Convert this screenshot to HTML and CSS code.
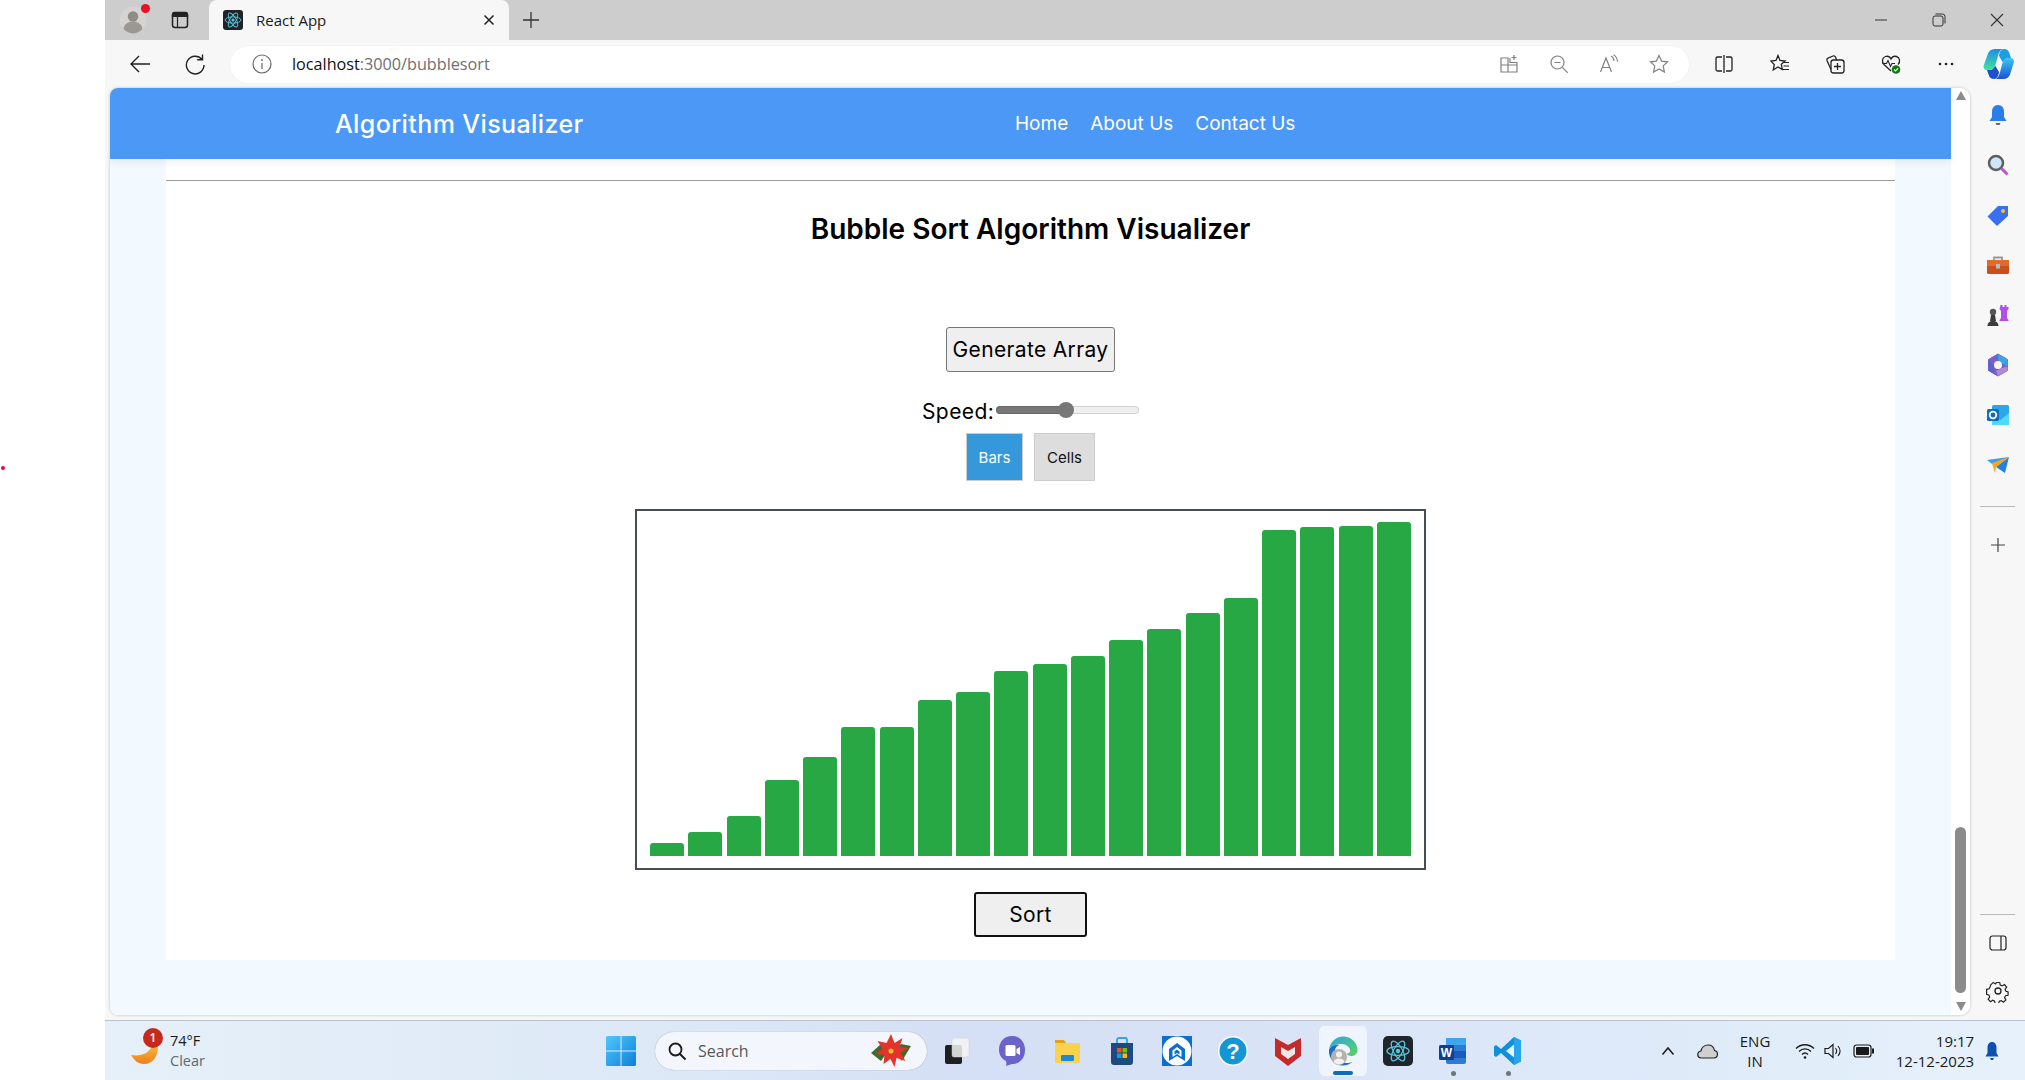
FILE: index.html
```html
<!DOCTYPE html>
<html lang="en">
<head>
    <meta charset="UTF-8">
    <title>React App</title>
    <link rel="stylesheet" href="styles.css">
</head>
<body>
    <svg class="defs" width="0" height="0">
        <symbol id="atom" viewBox="0 0 24 24">
            <g fill="none" stroke="#58c4dc" stroke-width="1.1">
                <ellipse cx="12" cy="12" rx="9.5" ry="3.8"/>
                <ellipse cx="12" cy="12" rx="9.5" ry="3.8" transform="rotate(60 12 12)"/>
                <ellipse cx="12" cy="12" rx="9.5" ry="3.8" transform="rotate(120 12 12)"/>
            </g>
            <circle cx="12" cy="12" r="1.9" fill="#58c4dc"/>
        </symbol>
    </svg>

    <div class="desktop-strip"><span class="red-dot"></span></div>

    <div class="screen">
        <div class="window">
            <!-- tab strip -->
            <div class="tabbar">
                <div class="profile">
                    <svg viewBox="0 0 28 28" width="28" height="28">
                        <circle cx="14" cy="14" r="13.5" fill="#d6d3d0"/>
                        <circle cx="14" cy="10.5" r="5.2" fill="#8f8b87"/>
                        <path d="M4.5 23c1-5.2 5-7.4 9.5-7.4s8.5 2.2 9.5 7.4c-2.5 2.8-5.8 4.4-9.5 4.4s-7-1.600-9.500-4.400z" fill="#9b9792"/>
                    </svg>
                    <span class="profile-dot"></span>
                </div>
                <svg class="tab-actions" viewBox="0 0 20 20" width="20" height="20">
                    <rect x="2.5" y="2.5" width="15" height="15" rx="2.5" fill="none" stroke="#222" stroke-width="1.5"/>
                    <path d="M2.5 6.5h15v-2a2 2 0 0 0-2-2h-11a2 2 0 0 0-2 2zM7.5 6.5v11" fill="#222" stroke="#222" stroke-width="1.2"/>
                </svg>
                <div class="tab">
                    <span class="favicon"><svg width="20" height="20"><use href="#atom"/></svg></span>
                    <span class="tab-title">React App</span>
                    <svg class="tab-close" viewBox="0 0 12 12" width="12" height="12"><path d="M1.5 1.5l9 9M10.5 1.5l-9 9" stroke="#222" stroke-width="1.5"/></svg>
                </div>
                <svg class="new-tab" viewBox="0 0 18 18" width="18" height="18"><path d="M9 1v16M1 9h16" stroke="#333" stroke-width="1.3"/></svg>
                <div class="win-controls">
                    <svg viewBox="0 0 14 14" width="14" height="14"><path d="M1 7h12" stroke="#333" stroke-width="1"/></svg>
                    <svg viewBox="0 0 14 14" width="14" height="14"><rect x="1" y="3" width="10" height="10" rx="2" fill="none" stroke="#333"/><path d="M3.5 1h7A2.5 2.5 0 0 1 13 3.5v7" fill="none" stroke="#333"/></svg>
                    <svg viewBox="0 0 14 14" width="14" height="14"><path d="M1 1l12 12M13 1L1 13" stroke="#333" stroke-width="1.1"/></svg>
                </div>
            </div>

            <!-- address bar row -->
            <div class="toolbar">
                <svg class="tool-back" viewBox="0 0 22 22" width="22" height="22"><path d="M21 11H2M10 3l-8 8 8 8" fill="none" stroke="#222" stroke-width="1.4"/></svg>
                <svg class="tool-reload" viewBox="0 0 22 22" width="22" height="22"><path d="M18 6.5A8.8 8.8 0 1 0 20 12M18.500 1.500v5.300h-5.300" fill="none" stroke="#222" stroke-width="1.4"/></svg>
                <div class="addressbar">
                    <svg class="info-icon" viewBox="0 0 20 20" width="20" height="20">
                        <circle cx="10" cy="10" r="9" fill="none" stroke="#666" stroke-width="1.2"/>
                        <path d="M10 9v6" stroke="#666" stroke-width="1.2"/><circle cx="10" cy="6" r=".9" fill="#666"/>
                    </svg>
                    <span class="url">localhost<span class="url-rest">:3000/bubblesort</span></span>
                    <div class="address-icons">
                        <svg viewBox="0 0 20 20" width="20" height="20"><path d="M2 4h7v14H2zM2 11h16v7H9M11 4v4.5h7V11" fill="none" stroke="#808080" stroke-width="1.2"/><path d="M15 1v5M12.500 3.500h5" stroke="#808080" stroke-width="1.2"/></svg>
                        <svg viewBox="0 0 20 20" width="20" height="20"><circle cx="8.5" cy="8.5" r="6.5" fill="none" stroke="#808080" stroke-width="1.2"/><path d="M13.300 13.300l5.500 5.500M5.500 8.500h6" stroke="#808080" stroke-width="1.2"/></svg>
                        <svg viewBox="0 0 20 20" width="20" height="20"><path d="M1.500 18L7 4l5.500 14M3.300 13.500h7.500" fill="none" stroke="#808080" stroke-width="1.2"/><path d="M12 2c2 1 3 3 3 5M14.500 0.800c2.500 1.500 4 4 4 7" fill="none" stroke="#808080" stroke-width="1.1"/></svg>
                        <svg viewBox="0 0 20 20" width="20" height="20"><path d="M10 1.500l2.600 5.600 6 .7-4.400 4.100 1.200 6.100-5.400-3-5.400 3 1.200-6.100L1.400 7.800l6-.7z" fill="none" stroke="#808080" stroke-width="1.2"/></svg>
                    </div>
                </div>
                <div class="tool-icons">
                    <svg viewBox="0 0 20 20" width="20" height="20"><path d="M8 3H3.500A1.500 1.500 0 0 0 2 4.500v11A1.500 1.500 0 0 0 3.500 17H8M12 3h4.500A1.500 1.500 0 0 1 18 4.500v11a1.500 1.500 0 0 1-1.500 1.500H12M10 1v18" fill="none" stroke="#222" stroke-width="1.3"/></svg>
                    <svg viewBox="0 0 20 20" width="20" height="20"><path d="M8 1.500l2 5 5 .5-3.700 3.300 1 5.200L8 13l-4.800 3 1.100-5.400L.8 7l5.200-.5z" fill="none" stroke="#222" stroke-width="1.3"/><path d="M14 8.500h5M13.500 12h5.500M13 15.500h6" stroke="#222" stroke-width="1.2"/></svg>
                    <svg viewBox="0 0 20 20" width="20" height="20"><rect x="6" y="6" width="13" height="13" rx="2.5" fill="none" stroke="#222" stroke-width="1.3"/><path d="M12.500 9v7M9 12.500h7M6 15.500L2 6.500c-.4-1 .2-2 1-2.400L8 2c1-.4 2-.1 2.500 1l1 3" fill="none" stroke="#222" stroke-width="1.3"/></svg>
                    <svg viewBox="0 0 20 20" width="20" height="20"><path d="M10 17L3 10.500C.5 8 1 3.500 4.500 2.500 7 1.800 9 3 10 5c1-2 3-3.200 5.500-2.500 3.500 1 4 5.500 1.500 8" fill="none" stroke="#222" stroke-width="1.3"/><path d="M1.500 9.500h4l1.500-3 2.500 6 1.500-3h3" fill="none" stroke="#222" stroke-width="1.1"/><circle cx="15" cy="15.500" r="4.300" fill="#107c10"/><path d="M13 15.500l1.500 1.500 2.500-2.700" fill="none" stroke="#fff" stroke-width="1.1"/></svg>
                    <svg viewBox="0 0 20 20" width="20" height="20"><circle cx="4" cy="10" r="1.3" fill="#222"/><circle cx="10" cy="10" r="1.3" fill="#222"/><circle cx="16" cy="10" r="1.3" fill="#222"/></svg>
                </div>
                <svg class="copilot" viewBox="0 0 32 32" width="32" height="32">
                    <defs>
                        <linearGradient id="cpA" x1="0" y1="0" x2="0" y2="1"><stop offset="0" stop-color="#1b8fe6"/><stop offset="1" stop-color="#45e0a0"/></linearGradient>
                        <linearGradient id="cpB" x1="0" y1="0" x2="0" y2="1"><stop offset="0" stop-color="#3cc8f2"/><stop offset="1" stop-color="#1a50d6"/></linearGradient>
                    </defs>
                    <path d="M21 1c3 0 5 2 5.500 4.500L28 10h-2c-3 0-5 1.500-6 4.500L16 8c.500-4 2-7 5-7z" fill="#1a9fe4"/>
                    <path d="M11 31c-3 0-5-2-5.500-4.500L4 22h2c3 0 5-1.500 6-4.500L16 24c-.500 4-2 7-5 7z" fill="#1d4fd0"/>
                    <path d="M12 1h9c-3 0-4.500 2-5.500 5l-3 11c-1 3-3 5-6 5H4c-2.500 0-4-2-3.300-4.500L4.500 7C5.500 3 8 1 12 1z" fill="url(#cpA)"/>
                    <path d="M20 31h-9c3 0 4.500-2 5.500-5l3-11c1-3 3-5 6-5h2c2.500 0 4 2 3.300 4.500L27.500 25c-1 4-3.500 6-7.500 6z" fill="url(#cpB)"/>
                </svg>
            </div>

            <div class="browser-body">
                <div class="viewport">
                    <div class="page">
                        <nav class="navbar">
                            <a class="brand" href="#">Algorithm Visualizer</a>
                            <div class="nav-links">
                                <a href="#">Home</a>
                                <a href="#">About Us</a>
                                <a href="#">Contact Us</a>
                            </div>
                        </nav>
                        <div class="page-bg">
                            <main class="panel">
                                <hr class="rule">
                                <h1>Bubble Sort Algorithm Visualizer</h1>
                                <button class="btn generate">Generate Array</button>
                                <div class="speed-row">
                                    <label for="speed">Speed:</label>
                                    <input id="speed" class="speed" type="range" min="0" max="100" value="49">
                                </div>
                                <div class="view-toggle">
                                    <button class="toggle active">Bars</button>
                                    <button class="toggle">Cells</button>
                                </div>
                                <div class="chart">
                                    <div class="bar" style="height: 13px"></div>
                                    <div class="bar" style="height: 24px"></div>
                                    <div class="bar" style="height: 40px"></div>
                                    <div class="bar" style="height: 76px"></div>
                                    <div class="bar" style="height: 99px"></div>
                                    <div class="bar" style="height: 129px"></div>
                                    <div class="bar" style="height: 129px"></div>
                                    <div class="bar" style="height: 156px"></div>
                                    <div class="bar" style="height: 164px"></div>
                                    <div class="bar" style="height: 185px"></div>
                                    <div class="bar" style="height: 192px"></div>
                                    <div class="bar" style="height: 200px"></div>
                                    <div class="bar" style="height: 216px"></div>
                                    <div class="bar" style="height: 227px"></div>
                                    <div class="bar" style="height: 243px"></div>
                                    <div class="bar" style="height: 258px"></div>
                                    <div class="bar" style="height: 326px"></div>
                                    <div class="bar" style="height: 329px"></div>
                                    <div class="bar" style="height: 330px"></div>
                                    <div class="bar" style="height: 334px"></div>
                                </div>
                                <button class="btn sort">Sort</button>
                            </main>
                        </div>
                    </div>
                    <div class="scrollbar">
                        <span class="arrow-up"></span>
                        <span class="thumb"></span>
                        <span class="arrow-down"></span>
                    </div>
                </div>

                <aside class="sidebar">
                    <svg viewBox="0 0 24 24" width="24" height="24"><path d="M12 2c-4 0-6 3-6 6.500V14l-2.500 4h17L18 14V8.500C18 5 16 2 12 2z" fill="#2b7de9"/><path d="M9.500 20h5l-1 2h-3z" fill="#666"/></svg>
                    <svg viewBox="0 0 24 24" width="24" height="24"><circle cx="10" cy="10" r="7" fill="#cfe6f7" stroke="#5f5f5f" stroke-width="2.5"/><path d="M15.500 15.500l6 6" stroke="#c64fd8" stroke-width="3"/></svg>
                    <svg viewBox="0 0 24 24" width="24" height="24"><path d="M1.500 13.500L12 3h10v10L11 23z" fill="#3a6ff0"/><circle cx="17" cy="8" r="2" fill="#f5c518"/></svg>
                    <svg viewBox="0 0 24 24" width="24" height="24"><path d="M8 7V4.500h8V7" fill="none" stroke="#999" stroke-width="1.8"/><rect x="1" y="7" width="22" height="14" rx="1.5" fill="#c8501f"/><rect x="1" y="7" width="22" height="6" fill="#e26b2c"/><rect x="10" y="11" width="4" height="4.5" fill="#bbb"/></svg>
                    <svg viewBox="0 0 24 24" width="24" height="24"><path d="M14.500 2h2v2h2V2h2v2h2v2l-1.500 2v7l1.500 2v1h-9v-1l1.500-2V8l-1.500-2z" fill="#b44de8"/><circle cx="7" cy="9" r="3.2" fill="#555"/><path d="M5 12h4l1 6H4zM1.500 23c0-3 2-5 5.500-5s5.500 2 5.500 5z" fill="#3c3c3c"/></svg>
                    <svg viewBox="0 0 24 24" width="24" height="24"><path d="M12 1l9.500 5.500v11L12 23l-9.500-5.500v-11z" fill="#7a5fd0" stroke="#7a5fd0" stroke-linejoin="round"/><path d="M12 1l9.500 5.500v7L16 10l-4-3z" fill="#35a5e8"/><path d="M2.500 6.500L8 14v5l4 4-9.500-5.500z" fill="#5a62c8"/><path d="M12 23l9.500-5.500v-4L16 15l-6 3z" fill="#b48ad8"/><circle cx="12" cy="12" r="4" fill="#f7f7f7"/></svg>
                    <svg viewBox="0 0 24 24" width="24" height="24"><rect x="6" y="2" width="17" height="20" rx="1.5" fill="#28a8ea"/><path d="M6 12l8.500 5L23 10v12H6z" fill="#50d9ff"/><rect x="1" y="6" width="12" height="12" rx="1.5" fill="#0f6cbd"/><circle cx="7" cy="12" r="3.3" fill="none" stroke="#fff" stroke-width="1.8"/></svg>
                    <svg viewBox="0 0 24 24" width="24" height="24"><path d="M1 7l22-3-9 6-4 4z" fill="#3a9bf0"/><path d="M23 4l-4 16-9-6z" fill="#2680e0"/><path d="M6 10l17-6-13 10-1 6z" fill="#f2a71e"/></svg>
                    <span class="side-divider"></span>
                    <svg class="side-plus" viewBox="0 0 16 16" width="16" height="16"><path d="M8 1v14M1 8h14" stroke="#444" stroke-width="1.2"/></svg>
                    <span class="side-divider side-divider-low"></span>
                    <svg class="side-panel" viewBox="0 0 20 20" width="20" height="20"><rect x="2" y="3" width="16" height="14" rx="2.5" fill="none" stroke="#222" stroke-width="1.2"/><path d="M13 3v14" stroke="#222" stroke-width="1.2"/></svg>
                    <svg class="side-gear" viewBox="0 0 24 24" width="24" height="24"><circle cx="12" cy="12" r="3" fill="none" stroke="#222" stroke-width="1.3"/><path d="M10 2h4l.6 3 2.300 1 2.600-1.600 2.700 3-1.800 2.500.6 2.200 2.900 1-.1 3.900-3 .6-1.100 2.200 1.600 2.600-2.900 2.700-2.500-1.800-2.300.7-1 2.900h-4l-.6-3-2.200-1-2.600 1.700-2.800-2.900 1.800-2.500-.7-2.300-2.900-1V10l3-.6 1-2.200L3.500 4.600l2.900-2.700 2.500 1.800 .5-.2z" transform="translate(1.8 1.8) scale(.85)" fill="none" stroke="#222" stroke-width="1.4"/></svg>
                </aside>
            </div>
        </div>

        <!-- windows taskbar -->
        <footer class="taskbar">
            <div class="weather">
                <div class="weather-icon">
                    <svg viewBox="0 0 30 30" width="30" height="30">
                        <defs><linearGradient id="moon" x1="0" y1="0" x2="0" y2="1"><stop offset="0" stop-color="#f9b93a"/><stop offset="1" stop-color="#ee7e1c"/></linearGradient></defs>
                        <path d="M1 19C7 20 12 19 16 17C19 15 21 12 23 9L28 11C28 20 23 28 14 28C8 28 4 24 1 19z" fill="url(#moon)"/>
                    </svg>
                    <span class="weather-badge">1</span>
                </div>
                <div class="weather-text">
                    <span class="temp">74°F</span>
                    <span class="cond">Clear</span>
                </div>
            </div>
            <svg class="start" viewBox="0 0 30 30" width="30" height="30">
                <defs><linearGradient id="winA" x1="0" y1="0" x2="1" y2="1"><stop offset="0" stop-color="#4fc8fb"/><stop offset="1" stop-color="#0f7fd8"/></linearGradient></defs>
                <path d="M0 1.500A1.500 1.500 0 0 1 1.500 0h13v14.500H0zM15.500 0h13A1.500 1.500 0 0 1 30 1.500v13H15.500zM0 15.500h14.500V30h-13A1.500 1.500 0 0 1 0 28.500zM15.500 15.500H30v13a1.500 1.500 0 0 1-1.500 1.500h-13z" fill="url(#winA)"/>
            </svg>
            <div class="searchbox">
                <svg viewBox="0 0 20 20" width="20" height="20"><circle cx="8.5" cy="8.5" r="6" fill="none" stroke="#1a1a1a" stroke-width="1.8"/><path d="M13 13l5.500 5.500" stroke="#1a1a1a" stroke-width="2"/></svg>
                <span class="search-label">Search</span>
                <svg class="flower" viewBox="0 0 44 36" width="44" height="36">
                    <path d="M2 20l10-9 7 7-7 10zM42 13l-10-2-6 8 7 9z" fill="#3f6b2c"/>
                    <path d="M22 1l3.500 9 8-5-3 9 9 1-8 5 5 8-9-3-2 9-4-8-7 5 1-9-9-1 7-5-5-8 9 2z" fill="#e3332a"/>
                    <circle cx="22" cy="18" r="2.5" fill="#f2c230"/>
                </svg>
            </div>
            <div class="task-icons">
                <span class="task-icon">
                    <svg viewBox="0 0 30 30" width="30" height="30"><rect x="3" y="9" width="17" height="19" rx="2" fill="#1f1f1f"/><rect x="10" y="2" width="17" height="19" rx="2" fill="#f4f4f4" fill-opacity=".85" stroke="#ccc" stroke-width=".5"/></svg>
                </span>
                <span class="task-icon">
                    <svg viewBox="0 0 30 30" width="30" height="30"><path d="M15 0c8 0 13 6 13 14s-5 14-13 14c-1 0-3 1-6 2 .5-2 .5-3 0-5-4-2-7-6-7-11C2 6 7 0 15 0z" fill="#6b63c9"/><rect x="8.500" y="9" width="10" height="11" rx="1.5" fill="#fff"/><path d="M19.500 13l3.500-2v8l-3.500-2z" fill="#fff"/></svg>
                </span>
                <span class="task-icon">
                    <svg viewBox="0 0 30 30" width="30" height="30"><path d="M3 4h9l2 3H3z" fill="#e0a21a"/><rect x="3" y="7" width="25" height="20" rx="1" fill="#fbd24e"/><rect x="9" y="19" width="13" height="6" rx="1" fill="#1b8ad8"/></svg>
                </span>
                <span class="task-icon">
                    <svg viewBox="0 0 30 30" width="30" height="30"><path d="M10 7V4a2 2 0 0 1 2-2h6a2 2 0 0 1 2 2v3" fill="none" stroke="#2ba4e8" stroke-width="1.8"/><path d="M4 7h22v19a3 3 0 0 1-3 3H7a3 3 0 0 1-3-3z" fill="#1d4a80"/><rect x="10" y="12" width="4.5" height="4.5" fill="#f25022"/><rect x="15.500" y="12" width="4.5" height="4.5" fill="#7fba00"/><rect x="10" y="17.500" width="4.5" height="4.5" fill="#00a4ef"/><rect x="15.500" y="17.500" width="4.5" height="4.5" fill="#ffb900"/></svg>
                </span>
                <span class="task-icon">
                    <svg viewBox="0 0 30 30" width="30" height="30"><rect width="30" height="30" fill="#0a6fd0"/><circle cx="15" cy="15" r="14.500" fill="#fff"/><path d="M7 25V13l8-6 8 6v12l-8-5z" fill="#0a6fd0"/><path d="M10.500 21V14.500l4.500-3.500 4.500 3.500V21l-4.500-3z" fill="#fff"/><path d="M12.500 18.500v-3l2.500-2 2.500 2v3l-2.500-1.500z" fill="#0a6fd0"/></svg>
                </span>
                <span class="task-icon">
                    <svg viewBox="0 0 30 30" width="30" height="30"><circle cx="15" cy="15" r="15" fill="#fff"/><circle cx="15" cy="15" r="13.5" fill="#1296d4"/><text class="help-mark" x="15" y="23" text-anchor="middle">?</text></svg>
                </span>
                <span class="task-icon">
                    <svg viewBox="0 0 30 30" width="30" height="30"><path d="M2 2l13 7 13-7v18L15 30 2 20z" fill="#c32a2a"/><path d="M8 11l7 4 7-4v7l-7 5-7-5z" fill="#f0e8e8"/></svg>
                </span>
                <span class="task-icon task-active">
                    <svg viewBox="0 0 30 30" width="30" height="30">
                        <defs><linearGradient id="edgeA" x1="0" y1="0" x2="1" y2="1"><stop offset="0" stop-color="#2ba5e0"/><stop offset="1" stop-color="#5fd35f"/></linearGradient></defs>
                        <path d="M1 14C2 6 8 .5 15 .5c8 0 14.500 6 14.500 13.500 0 4-3 6-6.500 6-2 0-4-1-4.500-2.500 3 0 4-2 3.500-4C21 10 17 8 13 8 7 8 2 11 1 14z" fill="url(#edgeA)"/>
                        <path d="M1 14c1-3 6-6 10-5-4 2-5 6-3.500 10 1 4 5 8 11 8 2 0 5-.5 6-1-3 2.500-7 3.500-10 3.500C7 29.500 0 22 1 14z" fill="#1b6fc7"/>
                        <circle cx="11" cy="21" r="8" fill="#b5b2ad"/>
                        <circle cx="11" cy="18.500" r="3" fill="#f2f0ee"/><path d="M5.500 26c.5-2.500 3-3.500 5.500-3.500s5 1 5.500 3.500c-1.500 1.500-3.500 2.500-5.500 2.500s-4-1-5.500-2.500z" fill="#f2f0ee"/>
                    </svg>
                    <span class="task-pill"></span>
                </span>
                <span class="task-icon">
                    <span class="react-tile"><svg width="28" height="28"><use href="#atom"/></svg></span>
                </span>
                <span class="task-icon">
                    <svg viewBox="0 0 30 30" width="30" height="30"><rect x="8" y="2" width="20" height="26" rx="2" fill="#2b7cd3"/><rect x="8" y="2" width="20" height="7" fill="#41a5ee"/><rect x="8" y="15" width="20" height="7" fill="#185abd"/><rect x="1" y="9" width="15" height="15" rx="1.5" fill="#103f91"/><text class="word-mark" x="8.5" y="21" text-anchor="middle">W</text></svg>
                    <span class="task-dot"></span>
                </span>
                <span class="task-icon">
                    <svg viewBox="0 0 30 30" width="30" height="30"><path d="M21 1l7 3.500v21L21 29 8 17l-5 4-2-1.500V10.500L3 9l5 4z" fill="#0f8fdc"/><path d="M21 1l7 3.500v21L21 29z" fill="#27a5ea"/><path d="M21 8.500L13 15l8 6.500z" fill="#fff" fill-opacity=".9"/></svg>
                    <span class="task-dot"></span>
                </span>
            </div>
            <div class="tray">
                <svg class="tray-caret" viewBox="0 0 14 10" width="14" height="10"><path d="M1.500 8.500L7 2l5.500 6.500" fill="none" stroke="#1a1a1a" stroke-width="1.5"/></svg>
                <svg class="tray-cloud" viewBox="0 0 22 18" width="22" height="18"><path d="M4.500 16a3.500 3.500 0 0 1-.5-7c.5-3 3-6 7-6s6 3 6.500 5.500A3.800 3.800 0 0 1 17 16z" fill="#cfcfcf" stroke="#222" stroke-width="1.2"/></svg>
                <span class="tray-lang">ENG<br>IN</span>
                <svg class="tray-wifi" viewBox="0 0 20 18" width="20" height="18"><path d="M1 6.500c5-5 13-5 18 0M4 9.500c3.500-3.500 8.500-3.500 12 0M7 12.500c1.800-1.800 4.200-1.800 6 0" fill="none" stroke="#1a1a1a" stroke-width="1.3"/><circle cx="10" cy="15.500" r="1.3" fill="#1a1a1a"/></svg>
                <svg class="tray-volume" viewBox="0 0 20 18" width="20" height="18"><path d="M2 6.500h3.500L10 2.500v13l-4.500-4H2z" fill="none" stroke="#1a1a1a" stroke-width="1.2"/><path d="M12.500 6c1.500 2 1.500 4 0 6M15 4c2.500 3 2.500 7 0 10" fill="none" stroke="#1a1a1a" stroke-width="1.1"/></svg>
                <svg class="tray-battery" viewBox="0 0 22 14" width="22" height="14"><rect x="1" y="1" width="17" height="12" rx="2.5" fill="none" stroke="#1a1a1a" stroke-width="1.2"/><rect x="3" y="3" width="13" height="8" rx="1" fill="#1a1a1a"/><rect x="19" y="4.500" width="2" height="5" fill="#1a1a1a"/></svg>
                <span class="tray-clock">19:17<br>12-12-2023</span>
                <svg class="tray-bell" viewBox="0 0 16 20" width="16" height="20"><path d="M8 1C5 1 3.500 3.500 3.500 6.500V12L1.500 15.500h13L12.500 12V6.500C12.500 3.500 11 1 8 1z" fill="#0f4fb0"/><path d="M6 17h4l-1 2H7z" fill="#0f4fb0"/></svg>
            </div>
        </footer>
    </div>
</body>
</html>
```

FILE: styles.css
```css
* {
    box-sizing: border-box;
}
html, body {
    height: 100%;
}
body {
    display: flex;
    margin: 0;
    background: #fff;
    overflow: hidden;
    font-family: "Open Sans", sans-serif;
}
svg {
    display: block;
    flex: none;
}
.defs {
    position: absolute;
}

/* white bit of desktop left of the browser */
.desktop-strip {
    position: relative;
    flex: none;
    width: 105px;
    background: #fff;
}
.red-dot {
    position: absolute;
    top: 466px;
    left: 1px;
    width: 4px;
    height: 4px;
    border-radius: 50%;
    background: #e0102a;
}
.screen {
    display: flex;
    flex-direction: column;
    flex: 1;
    min-width: 0;
}
.window {
    display: flex;
    flex-direction: column;
    height: 1020px;
    background: #f7f7f7;
}

/* tabs */
.tabbar {
    display: flex;
    align-items: center;
    height: 40px;
    background: #cdcdcd;
}
.profile {
    position: relative;
    margin-left: 14px;
}
.profile-dot {
    position: absolute;
    top: -2px;
    right: -3px;
    width: 9px;
    height: 9px;
    border-radius: 50%;
    background: #e81123;
}
.tab-actions {
    margin-left: 23px;
}
.tab {
    display: flex;
    align-items: center;
    align-self: stretch;
    width: 300px;
    margin-left: 19px;
    padding: 0 14px;
    background: #f7f7f7;
    border-radius: 8px 8px 0 0;
}
.favicon {
    display: flex;
    align-items: center;
    justify-content: center;
    width: 20px;
    height: 20px;
    background: #1f2328;
    border-radius: 3px;
}
.tab-title {
    margin-left: 13px;
    font-size: 15px;
    color: #1a1a1a;
}
.tab-close {
    margin-left: auto;
}
.new-tab {
    margin-left: 13px;
}
.win-controls {
    display: flex;
    gap: 44px;
    margin-left: auto;
    padding-right: 21px;
}

/* address row */
.toolbar {
    display: flex;
    align-items: center;
    flex: none;
    height: 48px;
}
.tool-back {
    margin-left: 24px;
}
.tool-reload {
    margin-left: 33px;
}
.addressbar {
    display: flex;
    align-items: center;
    width: 1459px;
    height: 37px;
    margin-left: 24px;
    padding: 0 20px 0 22px;
    background: #fff;
    border-radius: 19px;
    box-shadow: 0 0 2px rgba(0, 0, 0, 0.06);
}
.url {
    margin-left: 20px;
    font-size: 16.2px;
    color: #111;
}
.url-rest {
    color: #6f6f6f;
}
.address-icons {
    display: flex;
    gap: 30px;
    margin-left: auto;
}
.tool-icons {
    display: flex;
    gap: 35.5px;
    margin-left: 25px;
}
.copilot {
    margin-left: 27px;
}

.browser-body {
    display: flex;
    flex: 1;
    min-height: 0;
}
.viewport {
    display: flex;
    flex: none;
    width: 1860px;
    height: 927px;
    margin-left: 5px;
    background: #fff;
    border-radius: 8px 10px 10px 8px;
    box-shadow: 0 0 3px rgba(0, 0, 0, 0.25);
    overflow: hidden;
}

/* the page itself */
.page {
    display: flex;
    flex-direction: column;
    flex: 1;
    min-width: 0;
}
.navbar {
    position: relative;
    display: flex;
    align-items: center;
    flex: none;
    height: 71px;
    padding-left: 225px;
    background: #4b98f7;
    box-shadow: 0 4px 8px rgba(0, 0, 0, 0.06);
}
.navbar a {
    color: #fff;
    text-decoration: none;
}
.brand {
    width: 680px;
    font-family: "Inter", sans-serif;
    font-size: 25px;
    font-weight: 500;
    letter-spacing: 0.4px;
}
.nav-links {
    display: flex;
    gap: 22px;
    font-family: "Inter", sans-serif;
    font-size: 19px;
}
.page-bg {
    flex: 1;
    padding: 0 56px;
    background: #f3faff;
}
.panel {
    display: flex;
    flex-direction: column;
    align-items: center;
    padding: 21px 0 23px;
    background: #fff;
    font-family: "Inter", sans-serif;
}
.rule {
    align-self: stretch;
    height: 1px;
    margin: 0;
    border: 0;
    background: #9a9a9a;
}
h1 {
    margin: 27px 0 0;
    font-size: 28px;
    font-weight: 600;
    line-height: 42px;
    color: #000;
}
.btn {
    font-family: inherit;
    font-size: 21px;
    letter-spacing: 0.35px;
    color: #000;
    background: #efefef;
}
.generate {
    width: 169px;
    height: 45px;
    margin-top: 77px;
    padding: 0;
    border: 1px solid #767676;
    border-radius: 3px;
}
.speed-row {
    display: flex;
    align-items: center;
    width: 217px;
    height: 30px;
    margin-top: 23px;
}
.speed-row label {
    width: 74px;
    padding-top: 2px;
    font-size: 21px;
    letter-spacing: 0.4px;
    color: #000;
}
.speed {
    width: 143px;
    height: 16px;
    margin: 0;
    background: transparent;
    -webkit-appearance: none;
    appearance: none;
}
.speed::-webkit-slider-runnable-track {
    height: 8px;
    border-radius: 4px;
    background: linear-gradient(to right, #777 49%, #efefef 49%);
    box-shadow: inset 0 0 0 1px rgba(0, 0, 0, 0.12);
}
.speed::-webkit-slider-thumb {
    width: 16px;
    height: 16px;
    margin-top: -4px;
    border-radius: 50%;
    background: #777;
    -webkit-appearance: none;
}
.view-toggle {
    display: flex;
    gap: 11px;
    margin-top: 8px;
}
.toggle {
    width: 61px;
    height: 48px;
    padding: 0;
    border: 1px solid #ccc;
    font-family: inherit;
    font-size: 15px;
    color: #111;
    background: #ddd;
}
.toggle.active {
    width: 57px;
    color: #fff;
    background: #3498db;
}
.chart {
    display: flex;
    align-items: flex-end;
    justify-content: space-between;
    width: 791px;
    height: 361px;
    margin-top: 28px;
    padding: 0 13px 12px;
    border: 2px solid #484d55;
}
.bar {
    width: 34px;
    background: #28a745;
    border-radius: 3px 3px 0 0;
}
.sort {
    width: 113px;
    height: 45px;
    margin-top: 22px;
    padding: 0;
    border: 2px solid #111;
    border-radius: 3px;
}

/* fake scrollbar */
.scrollbar {
    display: flex;
    flex-direction: column;
    align-items: center;
    flex: none;
    width: 19px;
    padding: 3px 0 4px;
    background: #fff;
}
.arrow-up {
    width: 0;
    height: 0;
    border-right: 5px solid transparent;
    border-left: 5px solid transparent;
    border-bottom: 9px solid #8b8b8b;
}
.arrow-down {
    width: 0;
    height: 0;
    margin-top: 9px;
    border-right: 5px solid transparent;
    border-left: 5px solid transparent;
    border-top: 9px solid #8b8b8b;
}
.thumb {
    width: 11px;
    height: 166px;
    margin-top: auto;
    border-radius: 6px;
    background: #8b8b8b;
}

/* edge sidebar */
.sidebar {
    display: flex;
    flex-direction: column;
    align-items: center;
    flex: 1;
    gap: 26px;
    padding-top: 15px;
}
.side-divider {
    width: 35px;
    height: 1px;
    margin-top: 3px;
    background: #bbb;
}
.side-plus {
    margin-top: 4px;
}
.side-divider-low {
    margin-top: 335px;
}
.side-panel {
    margin-top: -8px;
}

/* taskbar */
.taskbar {
    display: flex;
    align-items: center;
    flex: none;
    height: 60px;
    border-top: 1px solid #b9c3cf;
    background: linear-gradient(90deg, #e6f0f9 0%, #dde8f7 30%, #d5dff5 45%, #dbe6f8 70%, #e6f1fb 100%);
}
.weather {
    display: flex;
    align-items: center;
    width: 501px;
    padding-left: 25px;
}
.weather-icon {
    position: relative;
}
.weather-badge {
    position: absolute;
    top: -8px;
    left: 13px;
    width: 20px;
    height: 20px;
    border-radius: 50%;
    font-size: 12px;
    font-weight: 600;
    line-height: 20px;
    text-align: center;
    color: #fff;
    background: #c42b1c;
}
.weather-text {
    display: flex;
    flex-direction: column;
    margin-left: 10px;
    font-size: 14.5px;
    line-height: 20px;
    color: #1a1a1a;
}
.cond {
    color: #5f6771;
}
.searchbox {
    display: flex;
    align-items: center;
    width: 272px;
    height: 38px;
    margin-left: 19px;
    padding: 0 14px 0 12px;
    border-radius: 19px;
    background: #f3f7fd;
    box-shadow: 0 0 1px rgba(0, 0, 0, 0.4);
}
.search-label {
    margin-left: 11px;
    font-size: 16px;
    color: #55585c;
}
.flower {
    margin-left: auto;
}
.task-icons {
    display: flex;
    margin-left: 2px;
}
.task-icon {
    position: relative;
    display: flex;
    align-items: center;
    justify-content: center;
    width: 55.2px;
    height: 50px;
}
.task-active {
    padding: 0 3.6px;
    background: rgba(255, 255, 255, 0.6);
    background-clip: content-box;
    border-radius: 8px;
}
.task-pill {
    position: absolute;
    bottom: 1px;
    left: 18px;
    width: 20px;
    height: 4px;
    border-radius: 2px;
    background: #0f6cbd;
}
.task-dot {
    position: absolute;
    bottom: 0;
    left: 25px;
    width: 5px;
    height: 5px;
    border-radius: 50%;
    background: #70757c;
}
.react-tile {
    display: flex;
    align-items: center;
    justify-content: center;
    width: 30px;
    height: 30px;
    border-radius: 5px;
    background: #20252b;
}
.help-mark {
    font-family: "Liberation Sans", sans-serif;
    font-size: 22px;
    font-weight: 700;
    fill: #fff;
}
.word-mark {
    font-family: "Liberation Sans", sans-serif;
    font-size: 12px;
    font-weight: 700;
    fill: #fff;
}
.tray {
    display: flex;
    align-items: center;
    flex: 1;
    color: #1a1a1a;
    font-size: 15px;
}
.tray-caret {
    margin-left: 125px;
}
.tray-cloud {
    margin-left: 22px;
}
.tray-lang {
    width: 38px;
    margin-left: 17px;
    line-height: 20px;
    text-align: center;
}
.tray-wifi {
    margin-left: 21px;
}
.tray-volume {
    margin-left: 8px;
}
.tray-battery {
    margin-left: 10px;
}
.tray-clock {
    width: 99px;
    line-height: 20px;
    text-align: right;
}
.tray-bell {
    margin-left: 10px;
}
```
